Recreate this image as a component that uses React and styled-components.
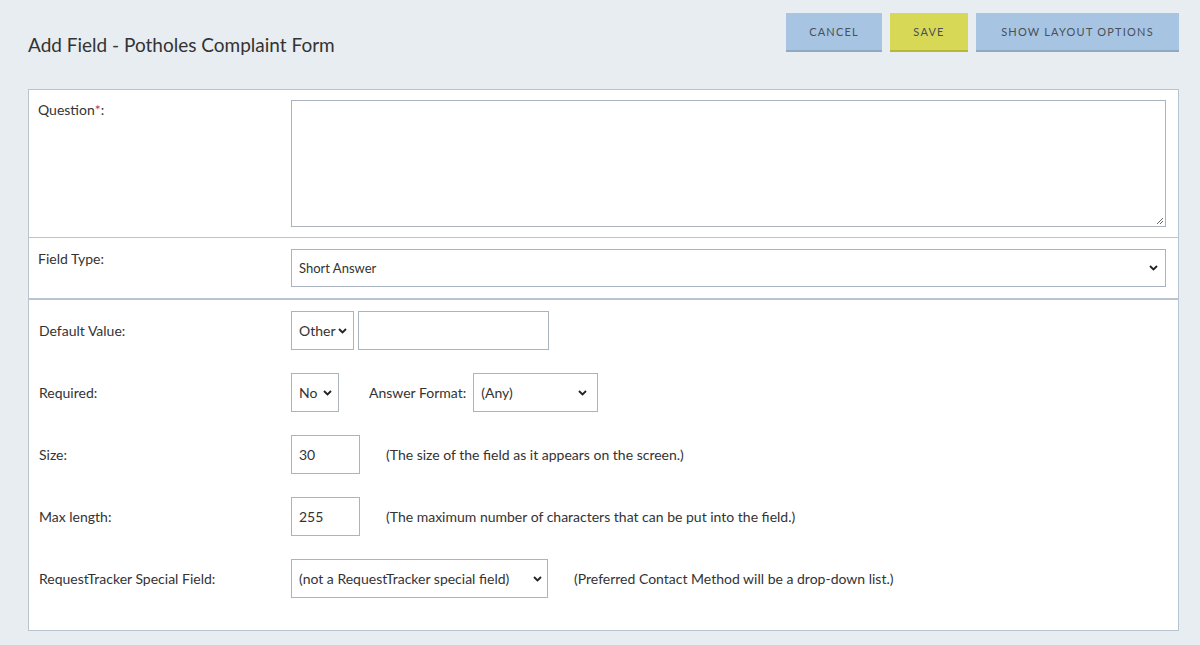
import React from "react";
import styled, { createGlobalStyle } from "styled-components";

const Global = createGlobalStyle`
  body { margin: 0; background: #e8edf1; font-family: Lato, "Noto Sans", sans-serif; color: #333; }
`;

const Page = styled.div`
  padding: 13px 21px 12px 28px;
`;
const Header = styled.div`
  display: flex; align-items: flex-start; justify-content: space-between; height: 76px;
`;
const Title = styled.h1`
  margin: 20px 0 0; font-size: 19px; font-weight: 400; color: #333;
`;
const Buttons = styled.div`display: flex; gap: 8px;`;
const Btn = styled.button`
  height: 39px; width: ${p => p.w}px; border: 0; border-bottom: 2px solid ${p => p.save ? "#b5b63a" : "#8fa8c4"};
  background: ${p => p.save ? "#d6d856" : "#a7c5e2"}; color: #4a4f58;
  font-family: Lato, sans-serif; font-size: 11px; letter-spacing: 1.2px; text-transform: uppercase;
`;
const Panel = styled.div`
  background: #fff; border: 1px solid #b8c4d0; width: 1149px;
`;
const Row = styled.div`
  display: grid; grid-template-columns: 253px 1fr; padding: ${p => p.pad};
  border-bottom: ${p => p.last ? "0" : "1px solid #b8c4d0"};
`;
const Label = styled.div`
  font-size: 14px; padding-top: ${p => p.top || 0}px; display: flex; align-items: ${p => p.center ? "center" : "flex-start"};
`;
const Star = styled.span`color: #c0394b;`;
const TextArea = styled.div`
  height: 125px; width: 873px; border: 1px solid #a9b4c0; position: relative;
`;
const Grip = styled.svg`position: absolute; right: 1px; bottom: 1px;`;
const Box = styled.div`
  height: ${p => p.h || 37}px; width: ${p => p.w}px; box-sizing: content-box;
  border: 1px solid #a9b4c0; display: flex; align-items: center; justify-content: space-between;
  padding: 0 ${p => p.pr ?? 7}px 0 7px; font-size: ${p => p.fs || 14}px; color: #333; flex: none;
`;
const Section = styled.div`
  border-top: 2px solid #b8c4d0; padding: 11px 0 32px 10px; display: flex; flex-direction: column; gap: 23px;
`;
const FRow = styled.div`display: grid; grid-template-columns: 252px 1fr; align-items: center;`;
const Controls = styled.div`display: flex; align-items: center; gap: ${p => p.gap || 4}px;`;
const Help = styled.span`font-size: 14px; margin-left: ${p => p.ml}px;`;

const Chev = () => (
  <svg width="9" height="6" viewBox="0 0 9 6"><path d="M1 1l3.5 3.5L8 1" fill="none" stroke="#222" strokeWidth="1.8"/></svg>
);
const Select = ({ w, children, pr }) => (
  <Box w={w} pr={pr}><span>{children}</span><Chev /></Box>
);

export default function App() {
  return (
    <Page>
      <Global />
      <Header>
        <Title>Add Field - Potholes Complaint Form</Title>
        <Buttons>
          <Btn w={96}>Cancel</Btn>
          <Btn w={78} save>Save</Btn>
          <Btn w={203}>Show Layout Options</Btn>
        </Buttons>
      </Header>
      <Panel>
        <Row pad="10px 12px 10px 9px">
          <Label top={1}>Question<Star>*</Star>:</Label>
          <TextArea>
            <Grip width="8" height="8" viewBox="0 0 8 8"><path d="M7 1L1 7M7 4L4 7" stroke="#666" strokeWidth="1"/></Grip>
          </TextArea>
        </Row>
        <Row pad="11px 12px 11px 9px" last>
          <Label top={1}>Field Type:</Label>
          <Box w={859} fs={13} h={36}><span>Short Answer</span><Chev /></Box>
        </Row>
        <Section>
          <FRow>
            <Label>Default Value:</Label>
            <Controls>
              <Select w={48} pr={6}>Other</Select>
              <Box w={175} />
            </Controls>
          </FRow>
          <FRow>
            <Label>Required:</Label>
            <Controls gap={0}>
              <Select w={33} pr={6}>No</Select>
              <Help ml={26}>Answer Format:</Help>
              <Box w={106} pr={10} style={{ marginLeft: 3 }}><span>(Any)</span><Chev /></Box>
            </Controls>
          </FRow>
          <FRow>
            <Label>Size:</Label>
            <Controls gap={0}>
              <Box w={53}>30</Box>
              <Help ml={22}>(The size of the field as it appears on the screen.)</Help>
            </Controls>
          </FRow>
          <FRow>
            <Label>Max length:</Label>
            <Controls gap={0}>
              <Box w={53}>255</Box>
              <Help ml={22}>(The maximum number of characters that can be put into the field.)</Help>
            </Controls>
          </FRow>
          <FRow>
            <Label>RequestTracker Special Field:</Label>
            <Controls gap={0}>
              <Select w={243} pr={5}>(not a RequestTracker special field)</Select>
              <Help ml={22}>(Preferred Contact Method will be a drop-down list.)</Help>
            </Controls>
          </FRow>
        </Section>
      </Panel>
    </Page>
  );
}
